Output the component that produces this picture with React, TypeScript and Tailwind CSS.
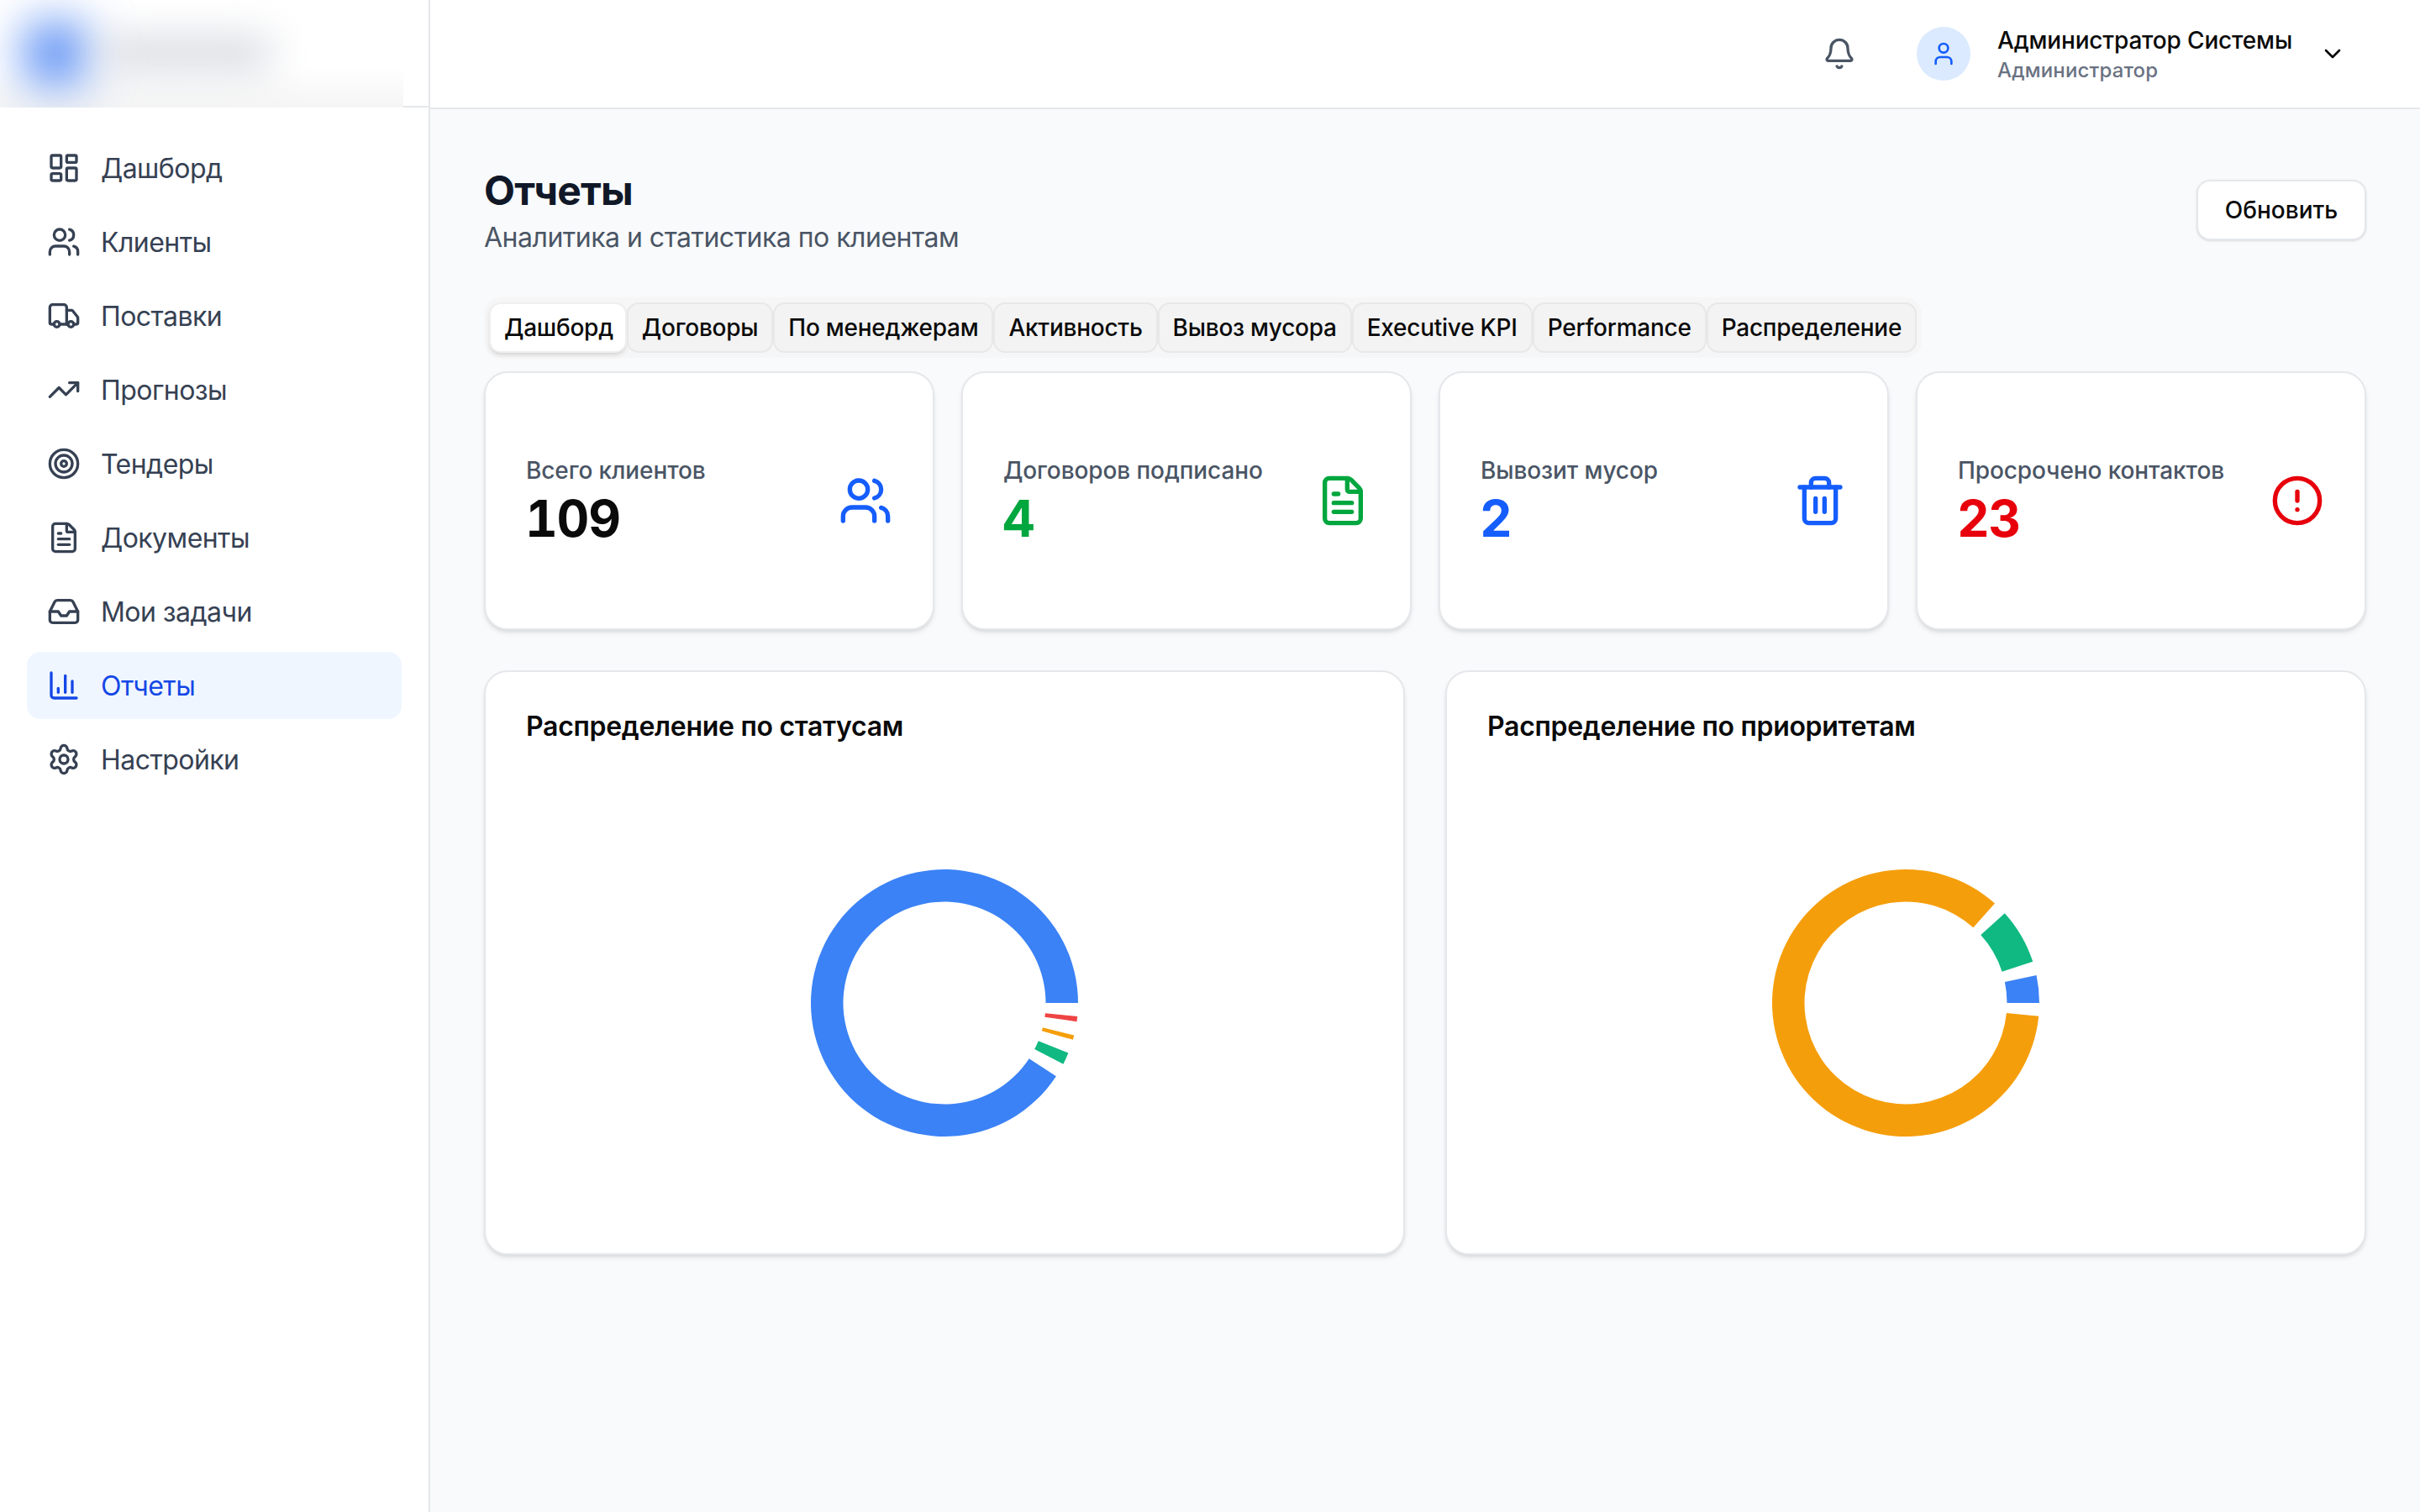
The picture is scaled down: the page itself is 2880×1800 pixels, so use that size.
import React from "react";
import {
  LayoutDashboard,
  Users,
  Truck,
  TrendingUp,
  Target,
  FileText,
  Inbox,
  ChartColumn,
  Settings,
  Bell,
  User,
  ChevronDown,
  Trash2,
  CircleAlert,
} from "lucide-react";

const nav = [
  { label: "Дашборд", icon: LayoutDashboard },
  { label: "Клиенты", icon: Users },
  { label: "Поставки", icon: Truck },
  { label: "Прогнозы", icon: TrendingUp },
  { label: "Тендеры", icon: Target },
  { label: "Документы", icon: FileText },
  { label: "Мои задачи", icon: Inbox },
  { label: "Отчеты", icon: ChartColumn, active: true },
  { label: "Настройки", icon: Settings },
];

const tabs = ["Дашборд", "Договоры", "По менеджерам", "Активность", "Вывоз мусора", "Executive KPI", "Performance", "Распределение"];

const stats = [
  { label: "Всего клиентов", value: "109", valueClass: "text-[#0a0a0a]", icon: Users, iconClass: "text-blue-600" },
  { label: "Договоров подписано", value: "4", valueClass: "text-green-600", icon: FileText, iconClass: "text-green-600" },
  { label: "Вывозит мусор", value: "2", valueClass: "text-blue-600", icon: Trash2, iconClass: "text-blue-600" },
  { label: "Просрочено контактов", value: "23", valueClass: "text-red-600", icon: CircleAlert, iconClass: "text-red-600" },
];

const CX = 170;
const CY = 266;
const RO = 159;
const RI = 120.5;

function sector(a0: number, a1: number) {
  const p = (r: number, a: number) => {
    const t = (a * Math.PI) / 180;
    return `${(CX + r * Math.cos(t)).toFixed(2)} ${(CY - r * Math.sin(t)).toFixed(2)}`;
  };
  const large = a1 - a0 > 180 ? 1 : 0;
  return `M${p(RO, a0)} A${RO} ${RO} 0 ${large} 0 ${p(RO, a1)} L${p(RI, a1)} A${RI} ${RI} 0 ${large} 1 ${p(RI, a0)} Z`;
}

const charts = [
  {
    title: "Распределение по статусам",
    parts: [
      { a: 0, b: 326.7, c: "#3b82f6" },
      { a: 332.8, b: 338, c: "#10b981" },
      { a: 344, b: 346, c: "#f59e0b" },
      { a: 352, b: 354.2, c: "#ef4444" },
    ],
  },
  {
    title: "Распределение по приоритетам",
    parts: [
      { a: 0, b: 12, c: "#3b82f6" },
      { a: 18, b: 42.2, c: "#10b981" },
      { a: 48.2, b: 354.3, c: "#f59e0b" },
    ],
  },
];

export default function App() {
  return (
    <div className="flex min-h-screen w-full bg-gray-50 font-['Inter',sans-serif] text-[#0a0a0a]">
      <aside className="w-[512px] shrink-0 border-r-2 border-gray-200 bg-white">
        <div className="h-[128px] border-b-2 border-gray-200">
          <div className="flex h-[128px] w-[480px] items-center gap-[20px] overflow-hidden bg-[linear-gradient(to_bottom,#ffffff_62%,#f5f5f5_100%)] pl-[30px]">
            <div className="h-[72px] w-[72px] shrink-0 rounded-[16px] bg-[#4f86f2] blur-[28px]" />
            <div className="h-[36px] w-[200px] shrink-0 bg-gray-300 blur-[24px]" />
          </div>
        </div>
        <nav className="flex flex-col gap-[8px] px-[32px] pt-[32px]">
          {nav.map((n) => {
            const Icon = n.icon;
            return (
              <div
                key={n.label}
                className={`flex h-[80px] items-center gap-[24px] rounded-[16px] px-[24px] text-[32px] leading-[48px] tracking-[-0.55px] ${
                  n.active ? "bg-blue-50 text-blue-700" : "text-gray-700"
                }`}
              >
                <Icon size={40} className="shrink-0" />
                <span className="pt-[2px]">{n.label}</span>
              </div>
            );
          })}
        </nav>
      </aside>

      <div className="flex min-w-0 flex-1 flex-col">
        <header className="flex h-[130px] items-center justify-end border-b-2 border-gray-200 bg-white pr-[88px]">
          <Bell size={40} className="mr-[72px] text-gray-600" />
          <div className="flex items-center gap-[32px]">
            <div className="flex h-[64px] w-[64px] items-center justify-center rounded-full bg-blue-100">
              <User size={32} className="text-blue-600" />
            </div>
            <div className="flex flex-col">
              <span className="text-[28px] font-medium leading-[40px] tracking-[-0.17px]">Администратор Системы</span>
              <span className="text-[24px] font-medium leading-[32px] tracking-[0.14px] text-gray-500">Администратор</span>
            </div>
            <ChevronDown size={32} />
          </div>
        </header>

        <main className="px-[64px] pt-[64px]">
          <div className="mb-[48px] flex items-center justify-between">
            <div>
              <h1 className="pt-[2px] text-[48px] font-bold leading-[62px] tracking-[-0.8px] text-gray-900">Отчеты</h1>
              <p className="pt-[2px] text-[32px] leading-[46px] tracking-[-0.5px] text-gray-600">Аналитика и статистика по клиентам</p>
            </div>
            <button className="h-[72px] w-[202px] rounded-[16px] border-2 border-gray-200 bg-white text-[28px] font-medium shadow-sm">
              Обновить
            </button>
          </div>

          <div className="mb-[16px] flex h-[72px] w-fit items-center rounded-[20px] bg-[#f6f6f7] p-[6px]">
            {tabs.map((t, i) => (
              <div
                key={t}
                className={`flex h-[60px] items-center rounded-[14px] border-2 text-[28px] font-medium leading-[40px] tracking-[-0.25px] ${
                  i === 0 ? "border-[#efefef] bg-white pl-[16px] pr-[14px] shadow-md" : "border-[#e8e8e8] bg-[#f3f3f3] px-[16px]"
                }`}
              >
                {t}
              </div>
            ))}
          </div>

          <div className="mb-[48px] grid grid-cols-4 gap-[32px]">
            {stats.map((s) => {
              const Icon = s.icon;
              return (
                <div
                  key={s.label}
                  className="flex items-center justify-between rounded-[28px] border-2 border-gray-200 bg-white px-[48px] py-[96px] shadow-md"
                >
                  <div>
                    <div className="text-[28px] font-medium leading-[40px] tracking-[-0.1px] text-gray-600">{s.label}</div>
                    <div className={`-ml-[1px] pt-[2px] text-[60px] font-bold leading-[70px] tracking-[-1.2px] tabular-nums ${s.valueClass}`}>{s.value}</div>
                  </div>
                  <Icon size={64} className={s.iconClass} />
                </div>
              );
            })}
          </div>

          <div className="grid grid-cols-2 gap-[48px]">
            {charts.map((c) => (
              <div
                key={c.title}
                className="h-[696px] rounded-[28px] border-2 border-gray-200 bg-white px-[48px] pt-[48px] shadow-md"
              >
                <h3 className="pt-[2px] text-[32px] font-semibold leading-[30px] tracking-[-0.3px]">{c.title}</h3>
                <div className="mt-[48px] flex justify-center">
                  <svg width="340" height="516" viewBox="0 0 340 516">
                    {c.parts.map((p, i) => (
                      <path key={i} d={sector(p.a, p.b)} fill={p.c} />
                    ))}
                  </svg>
                </div>
              </div>
            ))}
          </div>
        </main>
      </div>
    </div>
  );
}
